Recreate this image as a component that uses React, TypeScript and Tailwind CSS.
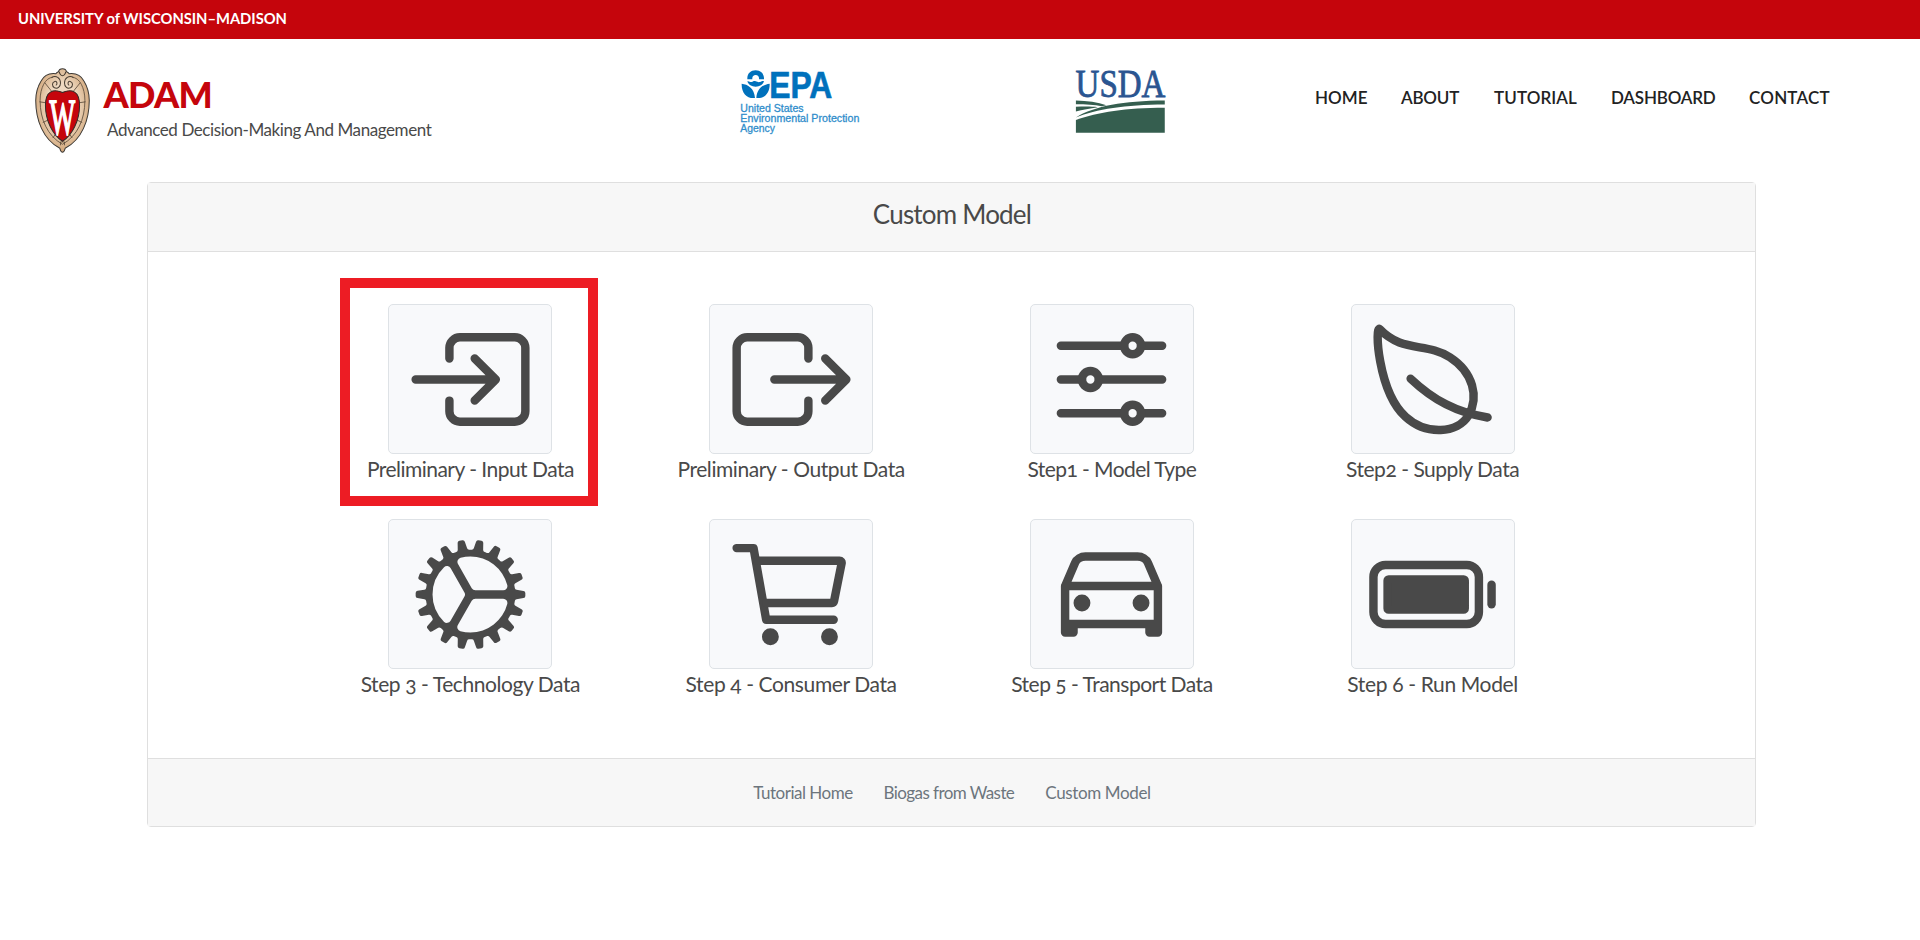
import React from 'react';
import {
  IoBatteryFullOutline,
  IoCarOutline,
  IoCartOutline,
  IoCogOutline,
  IoEnterOutline,
  IoExitOutline,
  IoLeafOutline,
  IoOptionsOutline,
} from 'react-icons/io5';
import type { IconType } from 'react-icons';

type Tile = { label: string; icon: IconType; tracking: string; highlighted?: boolean };

const tiles: Tile[] = [
  { label: 'Preliminary - Input Data', icon: IoEnterOutline, tracking: 'tracking-[-0.52px]', highlighted: true },
  { label: 'Preliminary - Output Data', icon: IoExitOutline, tracking: 'tracking-[-0.42px]' },
  { label: 'Step1 - Model Type', icon: IoOptionsOutline, tracking: 'tracking-[-0.57px]' },
  { label: 'Step2 - Supply Data', icon: IoLeafOutline, tracking: 'tracking-[-0.48px]' },
  { label: 'Step 3 - Technology Data', icon: IoCogOutline, tracking: 'tracking-[-0.42px]' },
  { label: 'Step 4 - Consumer Data', icon: IoCartOutline, tracking: 'tracking-[-0.39px]' },
  { label: 'Step 5 - Transport Data', icon: IoCarOutline, tracking: 'tracking-[-0.5px]' },
  { label: 'Step 6 - Run Model', icon: IoBatteryFullOutline, tracking: 'tracking-[-0.35px]' },
];

const navItems = [
  { label: 'HOME', className: 'w-[86px]' },
  { label: 'ABOUT', className: 'w-[93px] tracking-[-0.2px]' },
  { label: 'TUTORIAL', className: 'w-[117px] tracking-[0.1px]' },
  { label: 'DASHBOARD', className: 'w-[138px] tracking-[-0.2px]' },
  { label: 'CONTACT', className: 'tracking-[0.2px]' },
];

const footerLinks = [
  { label: 'Tutorial Home', className: 'tracking-[-0.5px]' },
  { label: 'Biogas from Waste', className: 'tracking-[-0.58px]' },
  { label: 'Custom Model', className: 'tracking-[-0.36px]' },
];

function Crest() {
  return (
    <svg viewBox="104 203 164 254" className="h-[85px] w-[55px] overflow-visible">
      <defs>
        <radialGradient id="crestStone" cx="0.5" cy="0.45" r="0.6">
          <stop offset="0.45" stopColor="#eed9c1" />
          <stop offset="1" stopColor="#cc9c6b" />
        </radialGradient>
      </defs>
      <path
        d="M186 205c7 0 11 4 12 9 4 1 6 3 8 6 17-2 35 5 44 22 11 18 16 36 16 58 0 58-22 117-72 143-2 7-4 12-8 12s-6-5-8-12c-50-26-72-85-72-143 0-22 5-40 16-58 9-17 27-24 44-22 2-3 4-5 8-6 1-5 5-9 12-9z"
        fill="url(#crestStone)"
        stroke="#3d3a36"
        strokeWidth="3"
      />
      <path
        d="M157 231c-22 0-38 32-38 69 0 56 22 106 67 131 45-25 67-75 67-131 0-37-16-69-38-69"
        fill="none"
        stroke="#5a4a39"
        strokeWidth="2.5"
      />
      <path
        d="M153 231c14-7 27 1 27 17 0 12-9 18-18 14-8-4-8-17 1-19 7-1 9 9 3 12M219 231c-14-7-27 1-27 17 0 12 9 18 18 14 8-4 8-17-1-19-7-1-9 9-3 12M176 214c2 8 5 12 10 12s8-4 10-12"
        fill="none"
        stroke="#453a2f"
        strokeWidth="3"
      />
      <path
        d="M133 247l20 25M239 247l-20 25M117 304l20 3M255 304l-20 3M127 366l21-10M245 366l-21-10M157 412l10-14M215 412l-10-14M180 434v-10h12v10"
        fill="none"
        stroke="#5a4a39"
        strokeWidth="2.5"
      />
      <path
        d="M186 276c10-5 26-7 36-1 12 7 15 24 15 40 0 44-21 88-51 107-30-19-51-63-51-107 0-16 3-33 15-40 10-6 26-4 36 1z"
        fill="#c5050c"
        stroke="#332b28"
        strokeWidth="3"
      />
      <text
        transform="translate(147 400) scale(0.7 1.33)"
        fill="#ffffff"
        stroke="#ffffff"
        strokeWidth="4"
        fontFamily="Liberation Serif, serif"
        fontSize="116"
      >
        W
      </text>
    </svg>
  );
}

function EpaLogo() {
  return (
    <svg viewBox="15 24 360 192" className="h-16 w-[120px] overflow-visible">
      <g fill="#0071bc">
        <path d="M37 52c-1-17 10-27 25-27s26 10 25 27H72c1-8-3-13-10-13s-11 5-10 13z" />
        <path d="M37 58c5-2 8 3 13 2s7-4 12-2 8 3 13 2 8-4 12-2c-3 10-13 16-25 16S40 68 37 58z" />
        <path d="M20 65c18 2 38 13 40 43-24 3-41-15-40-43zM104 65c-18 2-38 13-40 43 24 3 41-15 40-43z" />
      </g>
      <text
        x="103"
        y="107"
        fill="#0071bc"
        stroke="#0071bc"
        strokeWidth="2"
        fontFamily="Liberation Sans, sans-serif"
        fontWeight="700"
        fontSize="110"
        textLength="189"
        lengthAdjust="spacingAndGlyphs"
      >
        EPA
      </text>
      <g
        fill="#2f8dcb"
        stroke="#2f8dcb"
        strokeWidth="0.8"
        fontFamily="Liberation Sans, sans-serif"
        fontSize="30"
      >
        <text x="16" y="149" textLength="190" lengthAdjust="spacingAndGlyphs">United States</text>
        <text x="16" y="179" textLength="357" lengthAdjust="spacingAndGlyphs">Environmental Protection</text>
        <text x="16" y="209" textLength="104" lengthAdjust="spacingAndGlyphs">Agency</text>
      </g>
    </svg>
  );
}

function UsdaLogo() {
  return (
    <svg viewBox="1125 60 273 190" className="h-[63px] w-[91px] overflow-visible">
      <text
        x="1126"
        y="142"
        fill="#2a5591"
        stroke="#2a5591"
        strokeWidth="2.5"
        fontFamily="Liberation Serif, serif"
        fontSize="118"
        textLength="271"
        lengthAdjust="spacingAndGlyphs"
      >
        USDA
      </text>
      <g fill="#355e4f">
        <path d="M1127 152c34 1 66 5 92 14l-14 3c-22-4-48-6-78-6z" />
        <path d="M1127 171c26-1 48-1 66 1-24 4-46 8-66 13z" />
        <path d="M1127 203c58-35 142-50 268-51v12c-120 1-206 14-268 39z" />
        <path d="M1127 211c66-24 150-37 268-37v75h-268z" />
      </g>
    </svg>
  );
}

function TileCard({ tile }: { tile: Tile }) {
  const Icon = tile.icon;
  return (
    <div className="relative flex flex-col items-center">
      <button className="flex h-[150px] w-[164px] items-center justify-center rounded-[5px] border border-[#dee2e6] bg-[#f8f9fb] text-[#494949]">
        <Icon className="size-[135px]" />
      </button>
      <span className={`h-7 text-[21px] leading-[29px] whitespace-nowrap oldstyle-nums ${tile.tracking}`}>
        {tile.label}
      </span>
      {tile.highlighted && (
        <div className="absolute -top-[26px] left-[30px] h-[228px] w-[258px] border-10 border-[#ed1c24]" />
      )}
    </div>
  );
}

export default function App() {
  return (
    <div className="min-h-[940px] bg-white font-['Lato',sans-serif] text-[#494949]">
      <div className="flex h-[39px] items-center bg-[#c5050c] pb-[2px] pl-[18px]">
        <span className="text-[14.75px] font-bold tracking-[-0.03px] text-white">UNIVERSITY of WISCONSIN–MADISON</span>
      </div>

      <header className="flex h-[143px] items-start">
        <div className="flex w-[740px] items-start pl-[34.5px]">
          <div className="pt-[28.5px]">
            <Crest />
          </div>
          <div className="pt-[37px] pl-[14px]">
            <div className="text-[36px] leading-9 font-black tracking-[-0.7px] text-[#c5050c]">ADAM</div>
            <div className="mt-[6px] pl-[3.5px] text-[17px] leading-6 tracking-[-0.42px]">
              Advanced Decision-Making And Management
            </div>
          </div>
        </div>
        <div className="w-[335px] pt-[31px]">
          <EpaLogo />
        </div>
        <div className="w-[240px] pt-[31px]">
          <UsdaLogo />
        </div>
        <nav className="flex pt-[47px] text-[17px] leading-6 font-semibold text-[#222222]">
          {navItems.map((item) => (
            <a key={item.label} className={item.className}>
              {item.label}
            </a>
          ))}
        </nav>
      </header>

      <main className="ml-[147px] w-[1609px] rounded-[4px] border border-[#dfdfdf]">
        <h1 className="h-[69px] border-b border-[#dfdfdf] bg-[#f7f7f7] pt-[11px] pl-px text-center text-[26px] leading-10 font-normal tracking-[-0.8px]">
          Custom Model
        </h1>
        <div className="flex h-[506px] justify-center pt-[52px]">
          <div className="grid w-[1283px] auto-rows-min grid-cols-4 gap-y-[37px]">
            {tiles.map((tile) => (
              <TileCard key={tile.label} tile={tile} />
            ))}
          </div>
        </div>
        <footer className="flex h-[68px] items-center justify-center gap-[31px] border-t border-[#dfdfdf] bg-[#f7f7f7] pt-px pl-px text-[17px] text-[#6c757d]">
          {footerLinks.map((link) => (
            <a key={link.label} className={link.className}>
              {link.label}
            </a>
          ))}
        </footer>
      </main>
    </div>
  );
}
